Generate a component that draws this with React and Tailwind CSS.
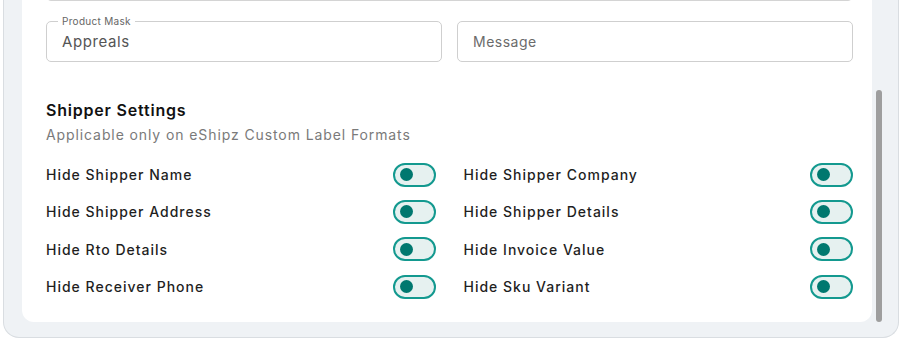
const left = [
  "Hide Shipper Name",
  "Hide Shipper Address",
  "Hide Rto Details",
  "Hide Receiver Phone",
];
const right = [
  "Hide Shipper Company",
  "Hide Shipper Details",
  "Hide Invoice Value",
  "Hide Sku Variant",
];

function Toggle() {
  return (
    <span className="flex h-[24px] w-[43px] items-center rounded-full border-2 border-[#13998f] bg-[#e6f1f0] pl-[5px]">
      <span className="h-[13px] w-[13px] rounded-full bg-[#00786f]" />
    </span>
  );
}

function Row({ label }) {
  return (
    <div className="flex h-[37.3px] items-center justify-between">
      <span className="text-[14px] font-medium tracking-[1px] text-[#1f1f1f]">{label}</span>
      <Toggle />
    </div>
  );
}

export default function App() {
  return (
    <div className="h-[340px] overflow-hidden bg-white font-['Inter',sans-serif]">
      <div className="-mt-[60px] mx-[3px] flex rounded-b-[16px] border border-t-0 border-[#d9dde1] bg-[#eff2f5] pb-[15px] pl-[18px] pr-[16px]">
        <div className="w-[850px] rounded-b-[12px] bg-white pb-[17px] pl-[24px] pr-[19px] pt-[20px]">
          <div className="h-[41px] rounded-[5px] border border-[#d4d4d4]" />
          <div className="mt-[20px] grid grid-cols-2 gap-[15px]">
            <div className="relative flex h-[41px] items-center rounded-[5px] border border-[#cfcfcf] px-[15px] pt-[1px] text-[15px] tracking-[0.6px] text-[#555]">
              <span className="absolute -top-[8px] left-[11px] bg-white px-[4px] text-[10px] leading-[14px] tracking-[0.3px] text-[#666]">
                Product Mask
              </span>
              Appreals
            </div>
            <div className="flex h-[41px] items-center rounded-[5px] border border-[#cfcfcf] px-[15px] text-[14px] tracking-[0.5px] text-[#6b6b6b]">
              Message
            </div>
          </div>
          <h2 className="mt-[36px] text-[16px] font-semibold leading-[24px] tracking-[0.8px] text-[#111]">Shipper Settings</h2>
          <p className="mt-[3px] text-[14px] leading-[20px] tracking-[0.9px] text-[#7a7a7a]">
            Applicable only on eShipz Custom Label Formats
          </p>
          <div className="mt-[11px] grid grid-cols-2 gap-x-[28px]">
            <div>
              {left.map((l) => (
                <Row key={l} label={l} />
              ))}
            </div>
            <div>
              {right.map((l) => (
                <Row key={l} label={l} />
              ))}
            </div>
          </div>
        </div>
        <div className="ml-[4px] h-[232px] w-[6px] self-end rounded-full bg-[#9e9e9e]" />
      </div>
    </div>
  );
}
